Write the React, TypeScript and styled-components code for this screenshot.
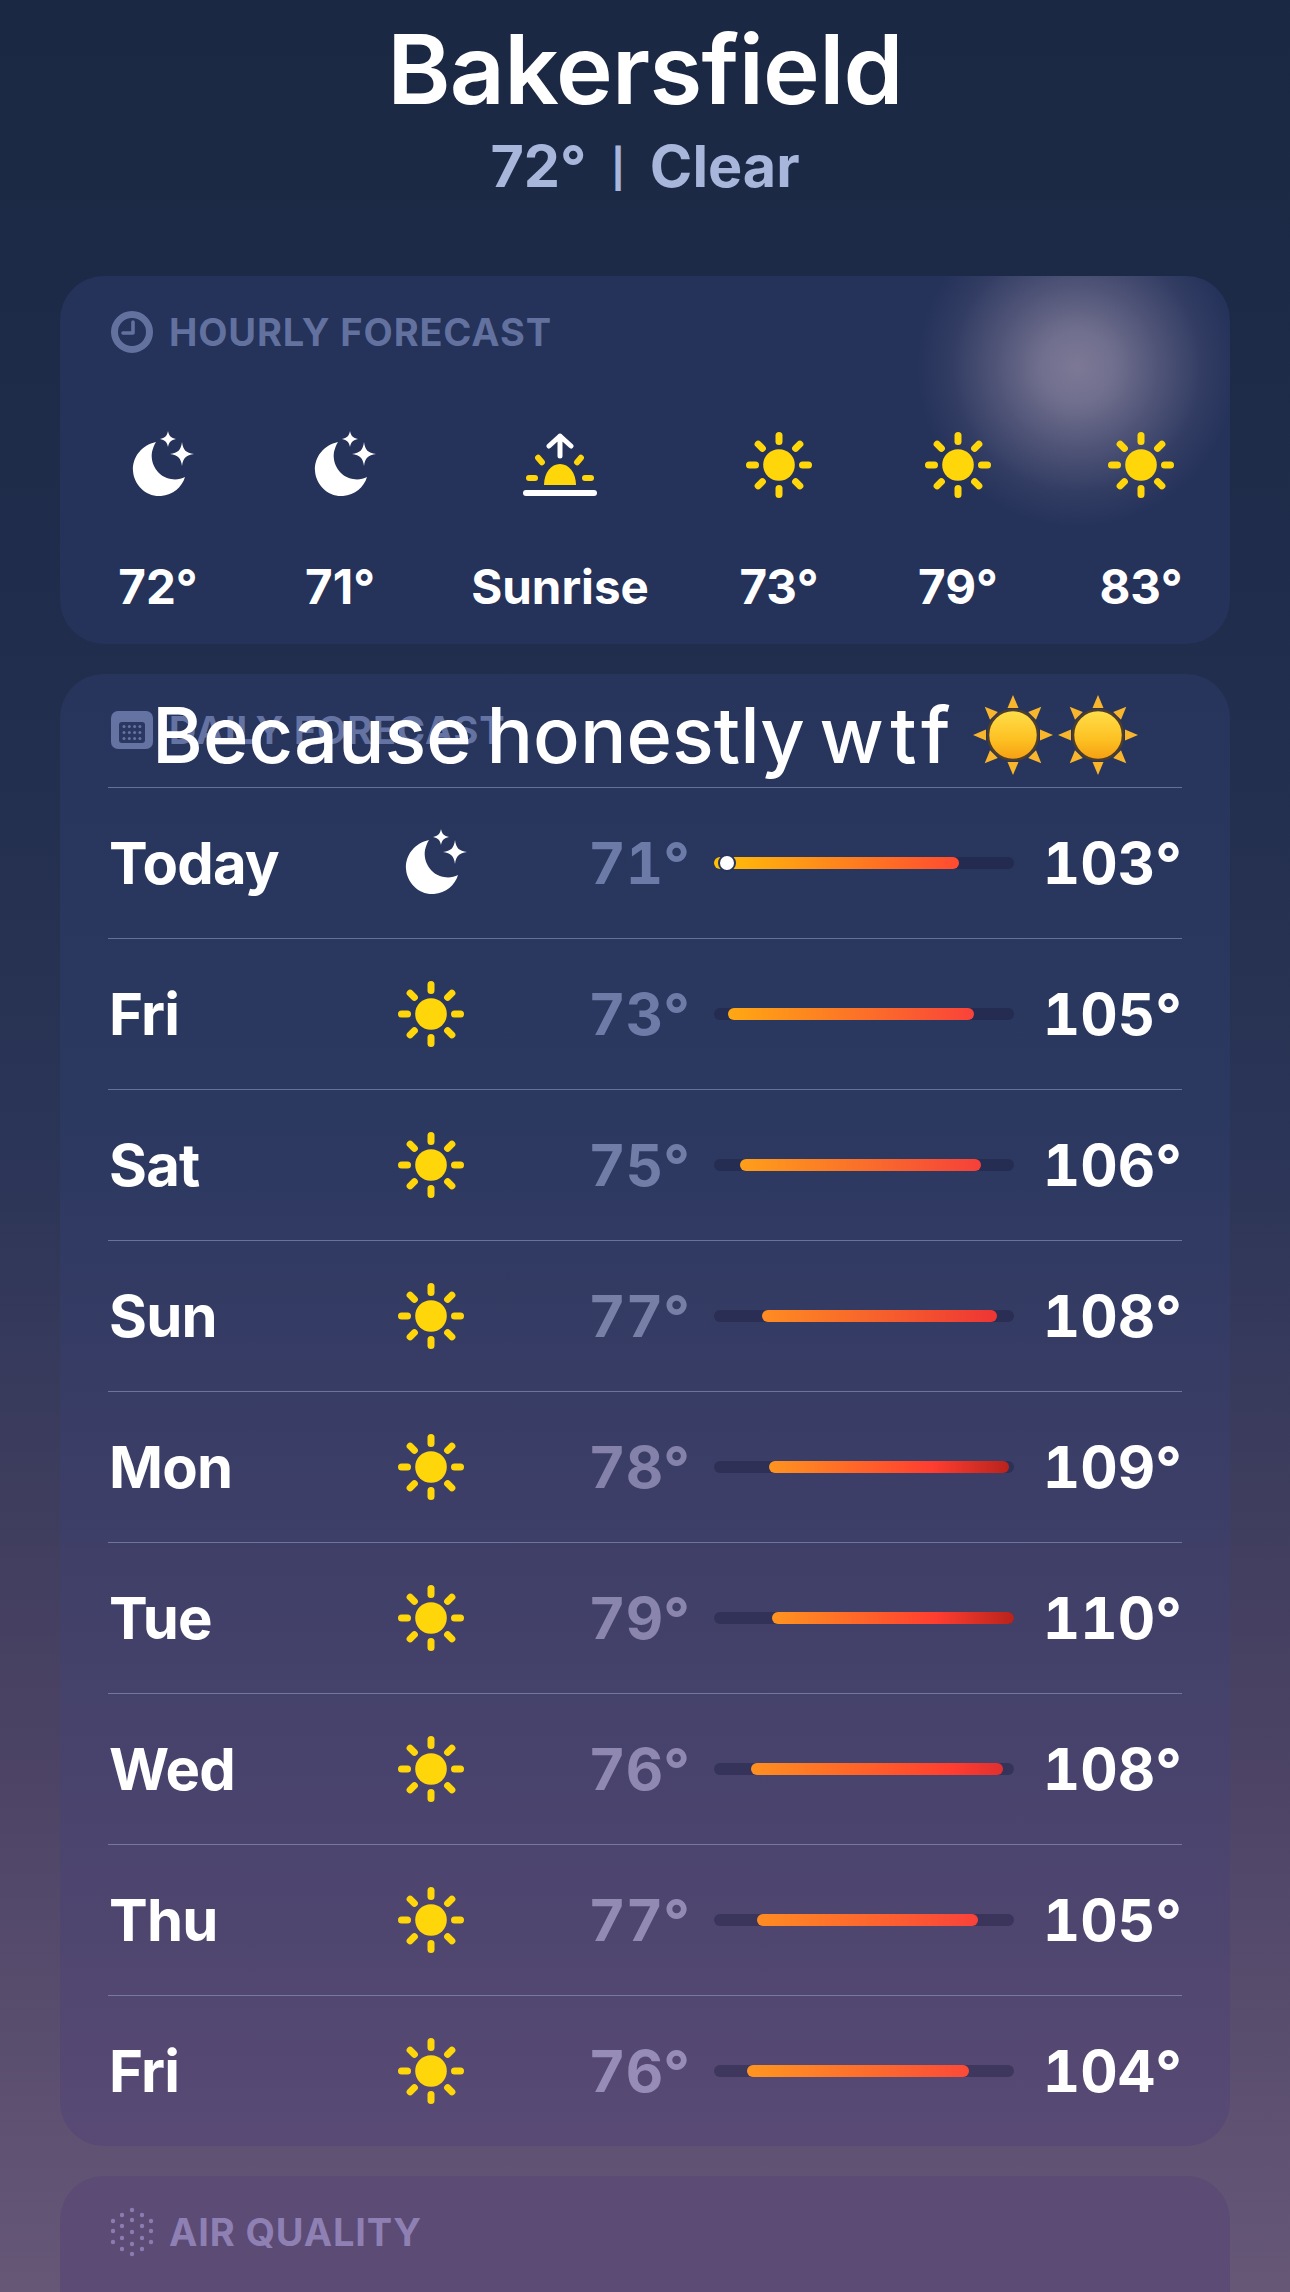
import React from 'react'
import styled, { createGlobalStyle } from 'styled-components'

const GlobalStyle = createGlobalStyle`
  html, body {
    margin: 0;
    padding: 0;
    height: 2292px;
    overflow: hidden;
    background: #1b2843;
  }
`

const Page = styled.div`
  width: 1290px;
  height: 2292px;
  position: relative;
  overflow: hidden;
  box-sizing: border-box;
  padding: 0 60px;
  font-family: Inter, 'Liberation Sans', sans-serif;
  color: #fff;
  background: linear-gradient(180deg, #1b2843 0%, #1f2c4b 25%, #2b3557 50%, #4a4263 75%, #665777 100%);
`

const Header = styled.header`
  height: 276px;
  text-align: center;
  padding-top: 13px;
  box-sizing: border-box;
`

const City = styled.h1`
  margin: 0;
  font-size: 96px;
  line-height: 112px;
  font-weight: 600;
  letter-spacing: -0.7px;
`

const Current = styled.div`
  margin-top: 7px;
  font-size: 57.5px;
  line-height: 68px;
  font-weight: 700;
  color: #a9b6dc;
  word-spacing: 11px;
`

const Pipe = styled.span`
  font-size: 38px;
  font-weight: 700;
  vertical-align: 5px;
`

const Card = styled.section<{ $height: number; $tint: string }>`
  position: relative;
  height: ${p => p.$height}px;
  margin-bottom: 30px;
  border-radius: 44px;
  background: ${p => p.$tint};
  overflow: hidden;
`

const Glow = styled.div`
  position: absolute;
  top: -69px;
  right: -7px;
  width: 320px;
  height: 320px;
  background: radial-gradient(
    closest-side,
    rgba(124, 120, 150, 1) 0%,
    rgba(124, 120, 150, 0.88) 22%,
    rgba(124, 120, 150, 0.5) 50%,
    rgba(124, 120, 150, 0.16) 78%,
    rgba(124, 120, 150, 0) 100%
  );
`

const CardHeading = styled.div<{ $color: string }>`
  position: relative;
  display: flex;
  align-items: center;
  gap: 15px;
  height: 44px;
  padding: 34px 0 0 50px;
  font-size: 38px;
  font-weight: 700;
  letter-spacing: 0.85px;
  color: ${p => p.$color};
  svg { flex: none; }
`

const HourlyRow = styled.div`
  position: relative;
  display: grid;
  grid-template-columns: 192px 172px 268px 170px 188px 178px;
  padding: 76px 0 0 2px;
`

const HourItem = styled.div`
  display: flex;
  flex-direction: column;
  align-items: center;
  gap: 57px;
  font-size: 47.5px;
  line-height: 60px;
  font-weight: 700;
`

const IconSlot = styled.div`
  height: 70px;
  display: flex;
  align-items: center;
  justify-content: center;
`

const DayList = styled.div`
  padding: 35px 48px 0;
  font-variant-numeric: tabular-nums;
`

const DayRow = styled.div`
  display: grid;
  grid-template-columns: 250px 146px 186px 324px 1fr;
  align-items: center;
  height: 150px;
  border-top: 1px solid rgba(160, 170, 215, 0.5);
`

const DayName = styled.div`
  padding-left: 1px;
  font-size: 58px;
  font-weight: 700;
  letter-spacing: -0.8px;
`

const DayIcon = styled.div`
  display: flex;
  justify-content: center;
`

const Low = styled.div<{ $color: string }>`
  text-align: right;
  font-size: 58px;
  font-weight: 700;
  color: ${p => p.$color};
`

const High = styled.div`
  text-align: right;
  font-size: 58px;
  font-weight: 700;
`

const Track = styled.div`
  position: relative;
  height: 12px;
  margin-left: 24px;
  border-radius: 6px;
  background: rgba(25, 25, 60, 0.38);
`

const Fill = styled.div<{ $stops: string }>`
  position: absolute;
  top: 0;
  bottom: 0;
  border-radius: 6px;
  background: linear-gradient(90deg, ${p => p.$stops});
`

const NowDot = styled.div`
  position: absolute;
  top: -1px;
  left: 6px;
  width: 14px;
  height: 14px;
  border-radius: 50%;
  background: #fff;
  box-shadow: 0 0 0 2px #26335a;
`

const Caption = styled.div`
  position: absolute;
  left: 152px;
  top: 687px;
  display: flex;
  align-items: center;
  font-size: 77.5px;
  line-height: 96px;
  font-weight: 500;
  white-space: pre;
  word-spacing: -6px;
`

const CaptionEnd = styled.span`
  letter-spacing: 6.5px;
`

const CaptionSuns = styled.span`
  display: inline-flex;
  margin-left: 16px;
  gap: 5px;
`

const Moon = () => (
  <svg width="80" height="70" viewBox="-10 0 80 70" fill="#fff">
    <path d="M28 12 C14 15 4 27 5 41 C6 55 18 67 33 66 C45 65 54 57 57 47 C53 49 48 50 43 49 C30 47 22 34 24 22 C25 18 26 15 28 12 Z" />
    <path d="M40 1 C41 6 43 8 48 9 C43 10 41 12 40 17 C39 12 37 10 32 9 C37 8 39 6 40 1 Z" />
    <path d="M54 12 C55 20 58 23 66 24 C58 25 55 28 54 36 C53 28 50 25 42 24 C50 23 53 20 54 12 Z" />
  </svg>
)

const Sun = () => (
  <svg width="68" height="68" viewBox="0 0 68 68" fill="#ffd60a">
    <circle cx="34" cy="34" r="15.8" />
    {[0, 45, 90, 135, 180, 225, 270, 315].map(a => (
      <rect key={a} x="30.5" y="1" width="7" height="13" rx="3.5" transform={`rotate(${a} 34 34)`} />
    ))}
  </svg>
)

const Sunrise = () => (
  <svg width="76" height="64" viewBox="0 0 76 64">
    <path d="M22 52 C22 40 29 31 38 31 C47 31 54 40 54 52 Z" fill="#ffd60a" />
    <g fill="#ffd60a">
      <rect x="4" y="42" width="12" height="6" rx="3" />
      <rect x="60" y="42" width="12" height="6" rx="3" />
      <rect x="15" y="21" width="6" height="12" rx="3" transform="rotate(-40 18 27)" />
      <rect x="54" y="21" width="6" height="12" rx="3" transform="rotate(40 57 27)" />
    </g>
    <rect x="1" y="57" width="74" height="6" rx="3" fill="#fff" />
    <path d="M38 23 V3 M27 13 L38 3 L49 13" fill="none" stroke="#fff" strokeWidth="5" strokeLinecap="round" strokeLinejoin="round" />
  </svg>
)

const EmojiSun = ({ id }: { id: string }) => (
  <svg width="80" height="80" viewBox="0 0 80 80">
    <defs>
      <linearGradient id={id} x1="0" y1="0" x2="0" y2="1">
        <stop offset="0" stopColor="#ffdf4a" />
        <stop offset="0.6" stopColor="#fdc022" />
        <stop offset="1" stopColor="#f59e12" />
      </linearGradient>
    </defs>
    {[0, 45, 90, 135, 180, 225, 270, 315].map(a => (
      <path key={a} d="M40 0 L45.5 13 L34.5 13 Z" fill="#f9b52c" transform={`rotate(${a} 40 40)`} />
    ))}
    <circle cx="40" cy="40" r="25" fill={`url(#${id})`} stroke="#4d3d2d" strokeWidth="2.5" />
  </svg>
)

const ClockIcon = () => (
  <svg width="44" height="44" viewBox="0 0 44 44" fill="none" stroke="#62719e" strokeLinecap="round" strokeLinejoin="round">
    <circle cx="22" cy="22" r="17.5" strokeWidth="7" />
    <path d="M23 12 V23 H13" strokeWidth="3.6" />
  </svg>
)

const CalendarIcon = () => (
  <svg width="44" height="38" viewBox="0 0 44 38">
    <rect x="1" y="0" width="42" height="38" rx="7" fill="#6473a2" />
    <rect x="9" y="11" width="26" height="21" rx="3" fill="#2a3760" />
    {[0, 1, 2, 3].map(c => [0, 1, 2].map(r => (
      <circle key={`${c}-${r}`} cx={14 + c * 5.3} cy={15.5 + r * 6} r="1.5" fill="#6473a2" />
    )))}
  </svg>
)

const AirIcon = () => (
  <svg width="44" height="50" viewBox="0 0 44 50" fill="#8a7cb0">
    {[
      [22, 3], [12, 8], [32, 8], [3, 14], [22, 13], [41, 14], [12, 19], [32, 19],
      [3, 24], [22, 25], [41, 24], [12, 31], [32, 31], [3, 35], [22, 37], [41, 35],
      [12, 42], [32, 42], [22, 47],
    ].map(([x, y]) => <circle key={`${x}-${y}`} cx={x} cy={y} r="2.2" />)}
  </svg>
)

interface Hour {
  label: string
  icon: 'moon' | 'sun' | 'sunrise'
}

const hours: Hour[] = [
  { label: '72°', icon: 'moon' },
  { label: '71°', icon: 'moon' },
  { label: 'Sunrise', icon: 'sunrise' },
  { label: '73°', icon: 'sun' },
  { label: '79°', icon: 'sun' },
  { label: '83°', icon: 'sun' },
]

interface Day {
  name: string
  low: number
  high: number
  start: number
  end: number
  stops: string
  lowColor: string
  now?: boolean
}

// start and end are the bar's pixels inside the 300px track
const days: Day[] = [
  { name: 'Today', low: 71, high: 103, start: 0, end: 245, stops: '#ffc107, #ff4a30', lowColor: '#6b7aa6', now: true },
  { name: 'Fri', low: 73, high: 105, start: 14, end: 260, stops: '#ffa812, #f9423a', lowColor: '#6d7ba6' },
  { name: 'Sat', low: 75, high: 106, start: 26, end: 267, stops: '#ff9f1a, #f5403a', lowColor: '#717da6' },
  { name: 'Sun', low: 77, high: 108, start: 48, end: 283, stops: '#ff8c22, #ee3535', lowColor: '#787fa6' },
  { name: 'Mon', low: 78, high: 109, start: 55, end: 295, stops: '#ff9420, #ff3d30 68%, #b8231c', lowColor: '#8482aa' },
  { name: 'Tue', low: 79, high: 110, start: 58, end: 300, stops: '#ff9420, #ff3d30 68%, #b8231c', lowColor: '#8a85ac' },
  { name: 'Wed', low: 76, high: 108, start: 37, end: 289, stops: '#ff9020, #ff3d30 80%, #e03030', lowColor: '#8f88b0' },
  { name: 'Thu', low: 77, high: 105, start: 43, end: 264, stops: '#ff8c22, #f9423a', lowColor: '#938ab4' },
  { name: 'Fri', low: 76, high: 104, start: 33, end: 255, stops: '#ff9620, #fa4a38', lowColor: '#978cb8' },
]

const App: React.FC = () => {
  return (
    <Page>
      <GlobalStyle />
      <Header>
        <City>Bakersfield</City>
        <Current>72° <Pipe>|</Pipe> Clear</Current>
      </Header>

      <Card $height={368} $tint="#25325a">
        <Glow />
        <CardHeading $color="#62719e">
          <ClockIcon />
          HOURLY FORECAST
        </CardHeading>
        <HourlyRow>
          {hours.map(hour => (
            <HourItem key={hour.label}>
              <IconSlot>
                {hour.icon === 'moon' && <Moon />}
                {hour.icon === 'sun' && <Sun />}
                {hour.icon === 'sunrise' && <Sunrise />}
              </IconSlot>
              {hour.label}
            </HourItem>
          ))}
        </HourlyRow>
      </Card>

      <Card $height={1472} $tint="linear-gradient(180deg, #27345c 0%, #2b3860 30%, #3f3f68 60%, #584a74 100%)">
        <CardHeading $color="#6473a2">
          <CalendarIcon />
          DAILY FORECAST
        </CardHeading>
        <DayList>
          {days.map((day, i) => (
            <DayRow key={i}>
              <DayName>{day.name}</DayName>
              <DayIcon>{day.now ? <Moon /> : <Sun />}</DayIcon>
              <Low $color={day.lowColor}>{day.low}°</Low>
              <Track>
                <Fill $stops={day.stops} style={{ left: day.start, width: day.end - day.start }} />
                {day.now && <NowDot />}
              </Track>
              <High>{day.high}°</High>
            </DayRow>
          ))}
        </DayList>
      </Card>

      <Card $height={200} $tint="#5c4b75">
        <CardHeading $color="#8f80b4">
          <AirIcon />
          AIR QUALITY
        </CardHeading>
      </Card>

      <Caption>
        <span>Because honestly </span>
        <CaptionEnd>wtf</CaptionEnd>
        <CaptionSuns>
          <EmojiSun id="emoji-sun-a" />
          <EmojiSun id="emoji-sun-b" />
        </CaptionSuns>
      </Caption>
    </Page>
  )
}

export default App
